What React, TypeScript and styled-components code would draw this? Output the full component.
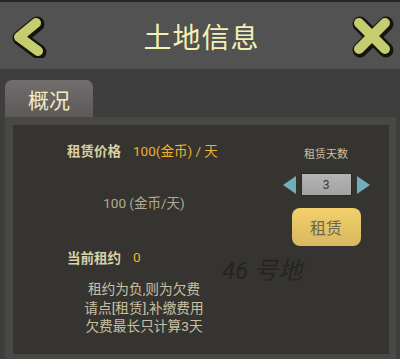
import React, { useState } from 'react';
import styled, { createGlobalStyle } from 'styled-components';

const GlobalStyle = createGlobalStyle`
  html, body {
    margin: 0;
    padding: 0;
    background: #3e3e3e;
  }
  body {
    font-family: Roboto, "Noto Sans CJK SC", sans-serif;
  }
`;

const Screen = styled.div`
  width: 400px;
  height: 359px;
  display: flex;
  flex-direction: column;
  background: #3e3e3e;
  overflow: hidden;
`;

const Header = styled.div`
  height: 67px;
  border-top: 2px solid #262626;
  background: #525252;
  display: flex;
  align-items: center;
  justify-content: space-between;
  padding: 0 6px 0 9px;
`;

const Title = styled.h1`
  margin: 0;
  font-size: 28px;
  font-weight: 400;
  letter-spacing: 1px;
  color: #f3f0b2;
  font-family: "Noto Sans CJK SC", sans-serif;
`;

const IconButton = styled.button`
  width: 44px;
  height: 44px;
  padding: 0;
  border: none;
  background: none;
  cursor: pointer;
  display: flex;
`;

const TabBar = styled.div`
  display: flex;
  padding: 11px 0 0 5px;
`;

const Tab = styled.div`
  width: 88px;
  height: 37px;
  border-radius: 7px 7px 0 0;
  background: linear-gradient(#726e6e, #5d5959);
  color: #f1ecc0;
  font-size: 21px;
  font-family: "Noto Sans CJK SC", sans-serif;
  display: flex;
  align-items: center;
  justify-content: center;
`;

const Frame = styled.div`
  flex: 1;
  margin: 0 4px 0 5px;
  padding: 8px 7px 5px 8px;
  background: #4a4844;
  display: flex;
`;

const Panel = styled.div`
  position: relative;
  flex: 1;
  background: #363430;
  display: grid;
  grid-template-columns: 262px 1fr;
`;

const LeftCol = styled.div`
  display: flex;
  flex-direction: column;
  align-items: center;
  padding-top: 15px;
`;

const InfoRow = styled.div<{ $top: number }>`
  align-self: stretch;
  display: flex;
  align-items: center;
  gap: 12px;
  padding-left: 54px;
  height: 20px;
  margin-top: ${(p) => p.$top}px;
`;

const Label = styled.span`
  font-size: 13.5px;
  font-weight: 700;
  color: #d9d0a6;
`;

const Value = styled.span`
  font-size: 13.5px;
  color: #eeb12c;
`;

const Plain = styled.div`
  margin-top: 33px;
  font-size: 13.5px;
  color: #b3ab94;
  height: 20px;
  line-height: 20px;
`;

const Notes = styled.div`
  margin-top: 13px;
  display: flex;
  flex-direction: column;
  align-items: center;
  font-size: 13.7px;
  line-height: 18.7px;
  color: #c9c0a2;
`;

const Watermark = styled.div`
  position: absolute;
  left: 209px;
  top: 126px;
  font-size: 24px;
  font-style: italic;
  color: #25241f;
  white-space: nowrap;
`;

const RightCol = styled.div`
  display: flex;
  flex-direction: column;
  align-items: center;
  padding: 22px 12px 0 0;
`;

const SmallLabel = styled.div`
  font-size: 11px;
  color: #c8c0a8;
  height: 16px;
  line-height: 16px;
`;

const Stepper = styled.div`
  margin-top: 10px;
  display: flex;
  align-items: center;
  gap: 5px;
`;

const Arrow = styled.button<{ $dir: 'left' | 'right' }>`
  width: 0;
  height: 0;
  padding: 0;
  background: none;
  cursor: pointer;
  border-top: 9px solid transparent;
  border-bottom: 9px solid transparent;
  border-left: ${(p) => (p.$dir === 'right' ? '13px solid #72adba' : 'none')};
  border-right: ${(p) => (p.$dir === 'left' ? '13px solid #72adba' : 'none')};
`;

const DayBox = styled.div`
  width: 49px;
  height: 21px;
  border: 1px solid #2a2a28;
  background: linear-gradient(#b4b4b4, #a2a2a2);
  color: #3a3a3a;
  font-size: 12px;
  display: flex;
  align-items: center;
  justify-content: center;
`;

const RentButton = styled.button`
  margin-top: 12px;
  width: 69px;
  height: 38px;
  border: none;
  border-radius: 8px;
  background: linear-gradient(#f2d06a, #d8b862);
  color: #6e6550;
  font-size: 16px;
  font-family: Roboto, "Noto Sans CJK SC", sans-serif;
  cursor: pointer;
`;

const BackIcon = () => (
  <svg width="44" height="44" viewBox="0 0 44 44">
    <path d="M28 10 L11 24 L30 38" fill="none" stroke="#151510" strokeWidth="15" strokeLinecap="round" strokeLinejoin="round" />
    <path d="M27 9 L10 23 L29 37" fill="none" stroke="#c5cd6e" strokeWidth="10" strokeLinecap="round" strokeLinejoin="round" />
  </svg>
);

const CloseIcon = () => (
  <svg width="44" height="44" viewBox="0 0 44 44">
    <g fill="none" stroke="#151510" strokeWidth="15" strokeLinecap="round">
      <path d="M10 10 L36 36" />
      <path d="M36 10 L10 36" />
    </g>
    <g fill="none" stroke="#c5cd6e" strokeWidth="10" strokeLinecap="round">
      <path d="M9 9 L35 35" />
      <path d="M35 9 L9 35" />
    </g>
  </svg>
);

export default function App() {
  const [days, setDays] = useState(3);

  return (
    <Screen>
      <GlobalStyle />
      <Header>
        <IconButton aria-label="back">
          <BackIcon />
        </IconButton>
        <Title>土地信息</Title>
        <IconButton aria-label="close">
          <CloseIcon />
        </IconButton>
      </Header>

      <TabBar>
        <Tab>概况</Tab>
      </TabBar>

      <Frame>
        <Panel>
          <LeftCol>
            <InfoRow $top={0}>
              <Label>租赁价格</Label>
              <Value>100(金币) / 天</Value>
            </InfoRow>
            <Plain>100 (金币/天)</Plain>
            <InfoRow $top={34}>
              <Label>当前租约</Label>
              <Value>0</Value>
            </InfoRow>
            <Notes>
              <span>租约为负,则为欠费</span>
              <span>请点[租赁],补缴费用</span>
              <span>欠费最长只计算3天</span>
            </Notes>
          </LeftCol>

          <RightCol>
            <SmallLabel>租赁天数</SmallLabel>
            <Stepper>
              <Arrow $dir="left" onClick={() => setDays((d) => Math.max(1, d - 1))} />
              <DayBox>{days}</DayBox>
              <Arrow $dir="right" onClick={() => setDays((d) => d + 1)} />
            </Stepper>
            <RentButton>租赁</RentButton>
          </RightCol>

          <Watermark>46 号地</Watermark>
        </Panel>
      </Frame>
    </Screen>
  );
}
